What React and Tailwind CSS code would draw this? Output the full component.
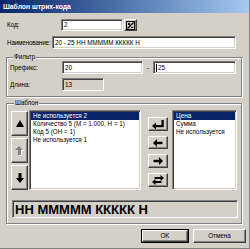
import React from "react";

const sunken =
  "border border-t-[#808080] border-l-[#808080] border-r-white border-b-white shadow-[inset_1px_1px_0_#404040,inset_-1px_-1px_0_#d4d0c8]";
const raised =
  "border border-t-white border-l-white border-r-[#404040] border-b-[#404040] shadow-[inset_-1px_-1px_0_#808080]";
const etched =
  "border border-[#808080] shadow-[1px_1px_0_#ffffff,inset_1px_1px_0_#ffffff]";

function Btn({ className = "", children }) {
  return (
    <div className={`${raised} bg-[#d4d0c8] flex items-center justify-center ${className}`}>
      {children}
    </div>
  );
}

function Field({ className = "", children, bg = "bg-white" }) {
  return (
    <div className={`${sunken} ${bg} flex items-center px-[2px] whitespace-nowrap overflow-hidden ${className}`}>
      {children}
    </div>
  );
}

export default function App() {
  return (
    <div className="w-[250px] h-[249px] bg-[#d4d0c8] overflow-hidden flex flex-col border-r border-b border-[#808080] font-['Liberation_Sans',Arial,sans-serif] text-[6.3px] leading-[8px] text-black">
      <div className="h-[13px] shrink-0 bg-gradient-to-r from-[#0a246a] to-[#a6caf0] text-white font-bold text-[6.8px] flex items-center pl-[3px]">
        Шаблон штрих-кода
      </div>

      <div className="flex flex-col pl-[6px] pr-[7px]">
        <div className="flex items-center mt-[6px]">
          <div className="w-[55px] pl-[1px]">Код:</div>
          <Field className="w-[62px] h-[12px]">2</Field>
          <Btn className="w-[13px] h-[12px] ml-[1px]">
            <svg width="9" height="9" viewBox="0 0 9 9">
              <rect x="0.5" y="0.5" width="8" height="8" fill="none" stroke="#000" />
              <path d="M1.5 7.5 L7.5 1.5" stroke="#000" strokeWidth="1.4" />
              <path d="M2 2 L4 4 M4 2 L2 4" stroke="#000" strokeWidth="0.9" />
              <rect x="5" y="6" width="2.5" height="1" fill="#000" />
            </svg>
          </Btn>
        </div>

        <div className="flex items-center mt-[5px]">
          <div className="w-[46px] pl-[1px] tracking-[-0.15px] whitespace-nowrap">Наименование:</div>
          <Field className="w-[184px] h-[13px]">20 - 25 НН ММММM ККККК Н</Field>
        </div>

        <fieldset className={`${etched} mt-[4px] px-[3px] pb-[5px]`}>
          <legend className="ml-[3px] px-[1px] leading-[8px] bg-[#d4d0c8]">Фильтр</legend>
          <div className="flex items-center">
            <div className="w-[52px]">Префикс:</div>
            <Field className="w-[81px] h-[13px]">20</Field>
            <div className="w-[10px] text-center">-</div>
            <Field className="w-[83px] h-[13px]">
              <span className="w-px h-[8px] bg-black mr-[1px]"></span>25
            </Field>
          </div>
          <div className="flex items-center mt-[4px]">
            <div className="w-[52px]">Длина:</div>
            <Field className="w-[42px] h-[13px]" bg="bg-[#d4d0c8]">13</Field>
          </div>
        </fieldset>

        <fieldset className={`${etched} mt-[2px] pl-[4px] pr-[3px] pt-[3px] pb-[5px]`}>
          <legend className="ml-[3px] px-[1px] leading-[8px] bg-[#d4d0c8]">Шаблон</legend>
          <div className="flex items-start">
            <div className="flex flex-col gap-[2px] w-[17px] mt-[1px]">
              <Btn className="h-[25px]">
                <svg width="8" height="7" viewBox="0 0 8 7">
                  <path d="M4 0 L8 7 L0 7 Z" fill="#000" />
                </svg>
              </Btn>
              <Btn className="h-[25px]">
                <svg width="9" height="10" viewBox="0 0 9 10">
                  <path d="M5 1 L9 5 L7 5 L7 10 L4 10 L4 5 L2 5 Z" fill="#ffffff" />
                  <path d="M4 0 L8 4 L6 4 L6 9 L3 9 L3 4 L0 4 Z" fill="#808080" />
                </svg>
              </Btn>
              <Btn className="h-[25px]">
                <svg width="8" height="10" viewBox="0 0 8 10">
                  <path d="M4 10 L8 5 L5.5 5 L5.5 0 L2.5 0 L2.5 5 L0 5 Z" fill="#000" />
                </svg>
              </Btn>
            </div>

            <div className={`${sunken} bg-white ml-[1px] w-[112px] h-[80px] p-[1px] whitespace-nowrap overflow-hidden`}>
              <div className="bg-[#0a246a] text-white pl-[2px] h-[8px]">Не используется 2</div>
              <div className="pl-[2px] h-[8px]">Количество 5 (M = 1.000, H = 1)</div>
              <div className="pl-[2px] h-[8px]">Код 5 (ОН = 1)</div>
              <div className="pl-[2px] h-[8px]">Не используется 1</div>
            </div>

            <div className="flex flex-col gap-[5px] w-[20px] ml-[7px] mt-[7px]">
              <Btn className="h-[14px]">
                <svg width="12" height="9" viewBox="0 0 12 9">
                  <path d="M0 6 L4 2.5 L4 9.5 Z" fill="#000" />
                  <rect x="3.5" y="5" width="8" height="2.2" fill="#000" />
                  <rect x="9.5" y="0" width="2.2" height="7" fill="#000" />
                </svg>
              </Btn>
              <Btn className="h-[13px]">
                <svg width="10" height="8" viewBox="0 0 10 8">
                  <path d="M0 4 L4 0 L4 8 Z" fill="#000" />
                  <rect x="3.5" y="2.8" width="6" height="2.4" fill="#000" />
                </svg>
              </Btn>
              <Btn className="h-[14px]">
                <svg width="10" height="8" viewBox="0 0 10 8">
                  <path d="M10 4 L6 0 L6 8 Z" fill="#000" />
                  <rect x="0.5" y="2.8" width="6" height="2.4" fill="#000" />
                </svg>
              </Btn>
              <Btn className="h-[14px]">
                <svg width="12" height="10" viewBox="0 0 12 10">
                  <path d="M12 3 L8.5 0 L8.5 6 Z" fill="#000" />
                  <rect x="2.5" y="2" width="6.5" height="2" fill="#000" />
                  <path d="M0 7 L3.5 4 L3.5 10 Z" fill="#000" />
                  <rect x="3" y="6" width="6.5" height="2" fill="#000" />
                </svg>
              </Btn>
            </div>

            <div className={`${sunken} bg-white ml-[4px] w-[65px] h-[80px] p-[1px] whitespace-nowrap overflow-hidden`}>
              <div className="bg-[#0a246a] text-white pl-[2px] h-[8px]">Цена</div>
              <div className="pl-[2px] h-[8px]">Сумма</div>
              <div className="pl-[2px] h-[8px]">Не используется</div>
            </div>
          </div>

          <div className={`${sunken} bg-[#d4d0c8] mt-[10px] ml-[1px] w-[226px] h-[18px] flex items-center pl-[2px] font-bold text-[13px] leading-[13px] whitespace-nowrap`}>
            НН ММММM ККККК Н
          </div>
        </fieldset>

        <div className="flex justify-end mt-[5px] -mr-[4px] gap-[4px]">
          <div className="w-[48px] h-[14px] border border-black flex">
            <div className={`${raised} bg-[#d4d0c8] flex-1 flex items-center justify-center`}>OK</div>
          </div>
          <div className={`${raised} bg-[#d4d0c8] w-[53px] h-[14px] flex items-center justify-center`}>Отмена</div>
        </div>
      </div>
    </div>
  );
}
